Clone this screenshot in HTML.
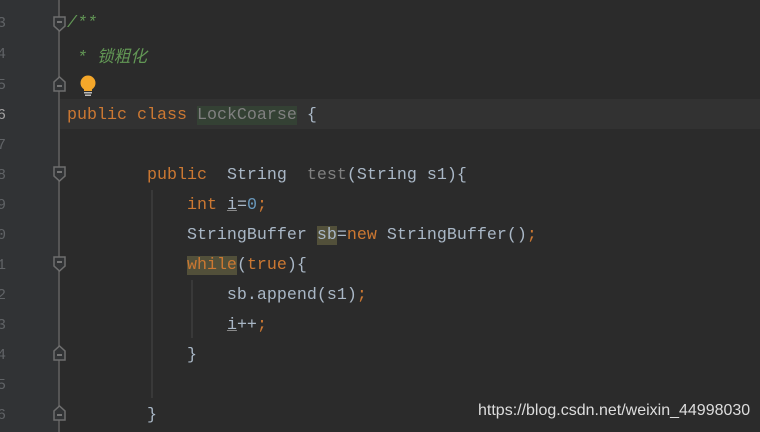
<!DOCTYPE html>
<html><head><meta charset="utf-8"><style>
body{margin:0;width:760px;height:432px;overflow:hidden;background:#2b2b2b;position:relative;font-family:"Liberation Mono",monospace;}
.gut{position:absolute;left:0;top:0;width:60px;height:432px;background:#313335;}
.fl{position:absolute;left:58px;top:0;width:2px;height:432px;background:#555;}
.hl{position:absolute;left:60px;top:99px;width:700px;height:30px;background:#323232;}
.ln{position:absolute;left:0;height:30px;line-height:30px;font-size:15px;color:#606366;width:6px;overflow:hidden;direction:rtl;}
.l{position:absolute;left:67px;height:30px;line-height:30px;font-size:16.67px;color:#a9b7c6;white-space:pre;}
.k{color:#cc7832}.c{color:#629755;font-style:italic}.n{color:#6897bb}.g{color:#808080}
.ig{position:absolute;width:2px;background:#393939;}
.fd{position:absolute;left:53px;width:13px;height:16px;}
.wm{position:absolute;left:478px;top:402px;font-family:"Liberation Sans",sans-serif;font-size:16px;color:#ddd;}
</style></head><body>
<div class="gut"></div><div class="fl"></div><div class="hl"></div>
<div class="ln" style="top:9px">3</div><div class="ln" style="top:40px">4</div><div class="ln" style="top:71px">5</div><div class="ln" style="top:101px;color:#a4a3a3">6</div><div class="ln" style="top:131px">7</div><div class="ln" style="top:161px">8</div><div class="ln" style="top:191px">9</div><div class="ln" style="top:221px">0</div><div class="ln" style="top:251px">1</div><div class="ln" style="top:281px">2</div><div class="ln" style="top:311px">3</div><div class="ln" style="top:341px">4</div><div class="ln" style="top:371px">5</div><div class="ln" style="top:401px">6</div>
<svg class="fd" style="top:16px" viewBox="0 0 13 16"><path d="M1 1H12V10L6.5 15L1 10Z" fill="#313335" stroke="#6e6e6e" stroke-width="1.5"/><path d="M4 6H9" stroke="#8a8a8a" stroke-width="1.5"/></svg>
<svg class="fd" style="top:76px" viewBox="0 0 13 16"><path d="M1 15H12V6L6.5 1L1 6Z" fill="#313335" stroke="#6e6e6e" stroke-width="1.5"/><path d="M4 10H9" stroke="#8a8a8a" stroke-width="1.5"/></svg>
<svg class="fd" style="top:166px" viewBox="0 0 13 16"><path d="M1 1H12V10L6.5 15L1 10Z" fill="#313335" stroke="#6e6e6e" stroke-width="1.5"/><path d="M4 6H9" stroke="#8a8a8a" stroke-width="1.5"/></svg>
<svg class="fd" style="top:256px" viewBox="0 0 13 16"><path d="M1 1H12V10L6.5 15L1 10Z" fill="#313335" stroke="#6e6e6e" stroke-width="1.5"/><path d="M4 6H9" stroke="#8a8a8a" stroke-width="1.5"/></svg>
<svg class="fd" style="top:345px" viewBox="0 0 13 16"><path d="M1 15H12V6L6.5 1L1 6Z" fill="#313335" stroke="#6e6e6e" stroke-width="1.5"/><path d="M4 10H9" stroke="#8a8a8a" stroke-width="1.5"/></svg>
<svg class="fd" style="top:405px" viewBox="0 0 13 16"><path d="M1 15H12V6L6.5 1L1 6Z" fill="#313335" stroke="#6e6e6e" stroke-width="1.5"/><path d="M4 10H9" stroke="#8a8a8a" stroke-width="1.5"/></svg>
<svg style="position:absolute;left:78px;top:75px" width="20" height="22" viewBox="0 0 20 22"><circle cx="10" cy="8" r="7.5" fill="#f4a72a"/><rect x="6" y="14" width="8" height="2" fill="#f4a72a"/><rect x="6" y="17" width="8" height="1.5" fill="#bbb"/><rect x="7" y="19.5" width="6" height="1.5" fill="#bbb"/></svg>
<div class="ig" style="left:151px;top:190px;height:208px"></div>
<div class="ig" style="left:191px;top:280px;height:58px"></div>
<div class="l" style="top:9px"><span class="c">/**</span></div>
<div class="l" style="top:40px"><span class="c"> * <span style="font-family:'Noto Sans CJK SC',sans-serif">锁粗化</span></span></div>
<div class="l" style="top:101px"><span class="k">public class </span><span class="g" style="background:#344134">LockCoarse</span> {</div>
<div class="l" style="top:161px">        <span class="k">public</span>  String  <span class="g">test</span>(String s1){</div>
<div class="l" style="top:191px">            <span class="k">int</span> <u style="text-decoration-color:#888">i</u>=<span class="n">0</span><span class="k">;</span></div>
<div class="l" style="top:221px">            StringBuffer <span style="background:#52503a">sb</span>=<span class="k">new</span> StringBuffer()<span class="k">;</span></div>
<div class="l" style="top:251px">            <span class="k" style="background:#52503a">while</span>(<span class="k">true</span>){</div>
<div class="l" style="top:281px">                sb.append(s1)<span class="k">;</span></div>
<div class="l" style="top:311px">                <u style="text-decoration-color:#888">i</u>++<span class="k">;</span></div>
<div class="l" style="top:341px">            }</div>
<div class="l" style="top:401px">        }</div>
<div class="wm">https://blog.csdn.net/weixin_44998030</div>
</body></html>
